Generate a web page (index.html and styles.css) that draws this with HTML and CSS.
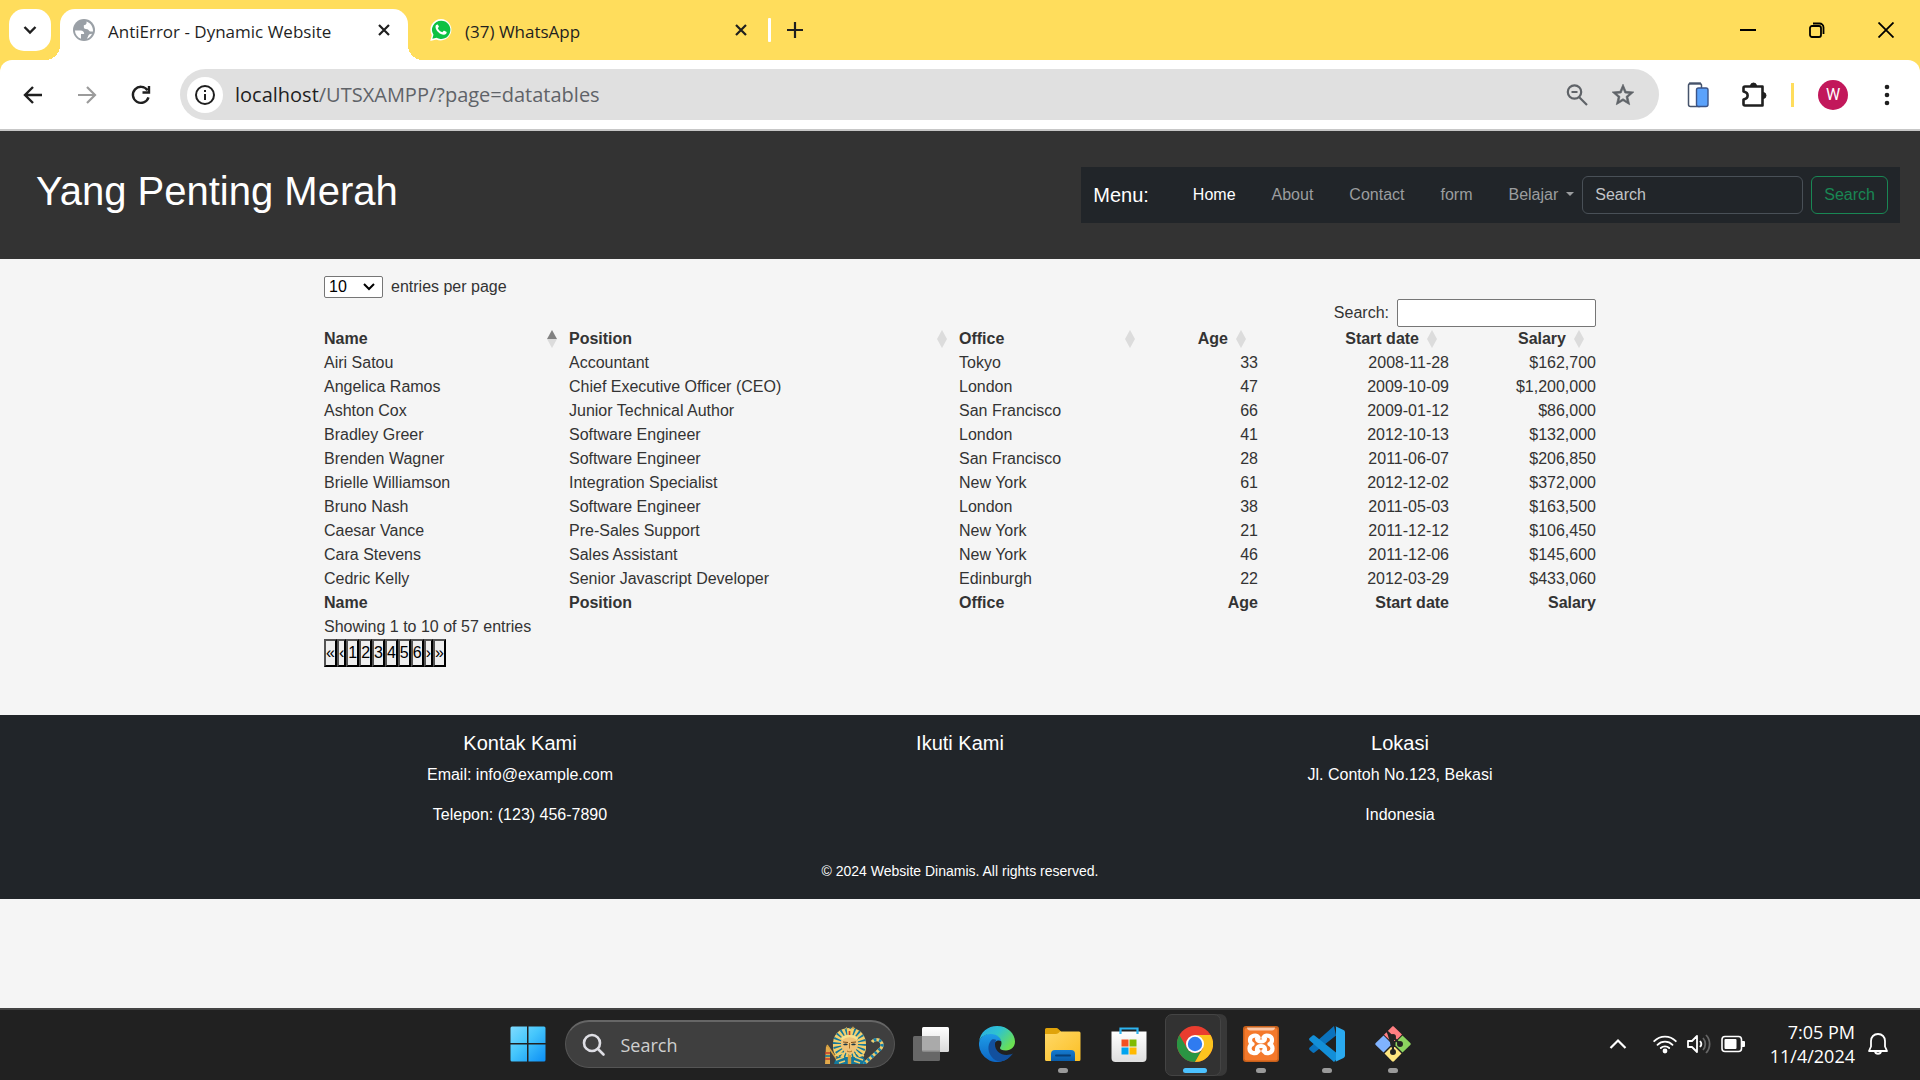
FILE: index.html
```html
<!DOCTYPE html>
<html lang="id">
<head>
<meta charset="utf-8">
<title>AntiError - Dynamic Website</title>
<link rel="stylesheet" href="styles.css">
</head>
<body>
<div class="desktop">
  <div class="browser">
    <div class="tabstrip">
      <button class="tab-search" aria-label="Search tabs"><svg width="16" height="16" viewBox="0 0 16 16" fill="none" stroke="#1f1f1f" stroke-width="2.4"><path d="M2.500 5l5.500 5.500L13.500 5"/></svg></button>
      <div class="tab tab-active">
        <svg width="22" height="22" viewBox="0 0 24 24"><circle cx="12" cy="12" r="12" fill="#9aa0a6"/><path fill="#fff" d="M2.100 12.500h6.400c2.200 0 3.700 1.600 3.700 3.800h-3.500v5.200C4.800 20 2.300 16.700 2.100 12.500zM14.800 2.500v1.700c0 1.800-1.200 2.600-3 2.700v1.800c0 1.300.8 2 2.300 2.200l1.600.2c1.500.2 1.800 2.300 3.600 2.500h2.500c.4-5.100-2.700-9.400-7-10.900zM20.800 16c-1 2.400-3 4.500-5.700 5.500l1.200-2.200c.7-1.400.6-2.300 2-2.700z"/></svg>
        <span class="tab-title">AntiError - Dynamic Website</span>
        <button class="icon-button" aria-label="Close tab"><svg width="14" height="14" viewBox="0 0 14 14" fill="none" stroke="#1f1f1f" stroke-width="2.200"><path d="M2 2l10 10M12 2L2 12"/></svg></button>
      </div>
      <div class="tab">
        <svg width="22" height="22" viewBox="0 0 24 24"><path fill="#fff" d="M12.200 0A11.700 11.700 0 0 0 2 17.500L.3 24l6.600-1.600A11.700 11.700 0 1 0 12.200 0z"/><path fill="#0dc143" d="M12.200 1.800a10 10 0 0 0-8.400 15.400l-1.200 4.300 4.500-1.100A10 10 0 1 0 12.200 1.800z"/><path fill="#fff" d="M8.800 6.500c-.3-.5-.5-.5-.9-.5-.6 0-1.900.8-1.900 2.700 0 3.500 4.900 8.500 9.200 8.500 1.700 0 3-1.200 3-2.500 0-.5-.1-.6-.4-.8l-2.200-1.100c-.4-.2-.7-.1-.9.2l-1 1.200c-.2.300-.5.300-.8.100-1.900-.8-3.200-2.100-4.200-3.900-.2-.3-.1-.5.100-.8l.8-1c.2-.3.100-.5 0-.7z"/></svg>
        <span class="tab-title">(37) WhatsApp</span>
        <button class="icon-button" aria-label="Close tab"><svg width="14" height="14" viewBox="0 0 14 14" fill="none" stroke="#1f1f1f" stroke-width="2.200"><path d="M2 2l10 10M12 2L2 12"/></svg></button>
      </div>
      <span class="tab-divider"></span>
      <button class="icon-button" aria-label="New tab"><svg width="16" height="16" viewBox="0 0 16 16" stroke="#1f1f1f" stroke-width="2.200"><path d="M8 0v16M0 8h16"/></svg></button>
      <div class="window-controls">
        <button class="icon-button" aria-label="Minimize"><svg width="16" height="16" viewBox="0 0 16 16"><path d="M0 7h16v2H0z"/></svg></button>
        <button class="icon-button" aria-label="Restore"><svg width="16" height="16" viewBox="0 0 16 16" fill="none" stroke="#000" stroke-width="1.800"><rect x="1" y="4" width="11" height="11" rx="2"/><path d="M4 1.500h6.500a4 4 0 0 1 4 4V12"/></svg></button>
        <button class="icon-button" aria-label="Close"><svg width="16" height="16" viewBox="0 0 16 16" stroke="#000" stroke-width="1.800"><path d="M.5.5l15 15M15.500.5l-15 15"/></svg></button>
      </div>
    </div>
    <div class="toolbar">
      <div class="nav-buttons">
        <button class="icon-button" aria-label="Back"><svg width="20" height="20" viewBox="0 0 20 20" fill="none" stroke="#1f1f1f" stroke-width="2.400"><path d="M19 10H2.500M10 2L2 10l8 8"/></svg></button>
        <button class="icon-button" aria-label="Forward"><svg width="20" height="20" viewBox="0 0 20 20" fill="none" stroke="#9b9b9b" stroke-width="2.200"><path d="M1 10h16.500M10 2l8 8-8 8"/></svg></button>
        <button class="icon-button" aria-label="Reload"><svg width="20" height="20" viewBox="0 0 20 20" fill="none" stroke="#1f1f1f" stroke-width="2.400"><path d="M17.500 12.300A8 8 0 1 1 16.500 5.300M18 1v6.500h-6.500"/></svg></button>
      </div>
      <div class="omnibox">
        <button class="site-info" aria-label="Site information"><svg width="22" height="22" viewBox="0 0 22 22" fill="none" stroke="#1f1f1f" stroke-width="2"><circle cx="11" cy="11" r="9"/><path d="M11 10v6M11 6v2"/></svg></button>
        <div class="url">localhost<span class="url-path">/UTSXAMPP/?page=datatables</span></div>
        <button class="icon-button" aria-label="Zoom"><svg width="22" height="22" viewBox="0 0 22 22" fill="none" stroke="#5f6368" stroke-width="2.200"><circle cx="8.500" cy="8" r="6.700"/><path d="M13 13l8 8M5.500 8h6"/></svg></button>
        <button class="icon-button" aria-label="Bookmark"><svg width="26" height="26" viewBox="0 0 24 24" fill="#5f6368"><path stroke="#5f6368" stroke-width=".6" d="M22 9.240l-7.190-.62L12 2 9.190 8.630 2 9.240l5.460 4.730L5.820 21 12 17.270 18.180 21l-1.630-7.030L22 9.240zM12 15.400l-3.760 2.270 1-4.280-3.320-2.880 4.380-.38L12 6.100l1.710 4.040 4.380.38-3.320 2.880 1 4.280L12 15.400z"/></svg></button>
      </div>
      <button class="icon-button phone" aria-label="Devices"><svg width="22" height="26" viewBox="0 0 22 26"><rect x="1.500" y="1.500" width="13" height="23" rx="2" fill="#fff" stroke="#46536b" stroke-width="1.500"/><path d="M2 1.500h12" stroke="#46536b" stroke-width="2.200"/><rect x="9.500" y="6" width="11.500" height="18.500" rx="2" fill="#5ba2fb" stroke="#3b5488" stroke-width="1.400"/></svg></button>
      <button class="icon-button puzzle" aria-label="Extensions"><svg width="26" height="26" viewBox="0 0 26 26"><path d="M4 4.500h17.500V23.500H4a1.500 1.500 0 0 1-1.500-1.500v-4.500c5.500-1 5.500-7 0-8V6A1.500 1.500 0 0 1 4 4.500z" fill="none" stroke="#1f1f1f" stroke-width="2.600" stroke-linejoin="round"/><path d="M9.500 4a3 3 0 0 1 6 0zM22 10.500a3 3 0 0 1 0 6z" fill="#1f1f1f" stroke="#1f1f1f"/></svg></button>
      <span class="toolbar-divider"></span>
      <button class="avatar" aria-label="Profile">W</button>
      <button class="icon-button" aria-label="More"><svg width="22" height="22" viewBox="0 0 22 22" fill="#1f1f1f"><circle cx="11" cy="3" r="2.300"/><circle cx="11" cy="11" r="2.300"/><circle cx="11" cy="19" r="2.300"/></svg></button>
    </div>
  </div>

  <div class="page">
    <header class="site-header">
      <h1>Yang Penting Merah</h1>
      <nav class="navbar">
        <a class="brand" href="#">Menu:</a>
        <ul class="nav-links">
          <li><a class="active" href="#">Home</a></li>
          <li><a href="#">About</a></li>
          <li><a href="#">Contact</a></li>
          <li><a href="#">form</a></li>
          <li><a class="dropdown" href="#">Belajar</a></li>
        </ul>
        <form class="nav-search">
          <input type="search" placeholder="Search" aria-label="Search">
          <button type="button">Search</button>
        </form>
      </nav>
    </header>

    <main class="container">
      <div class="length-row">
        <div class="select-box">
          <select id="length"><option>10</option><option>25</option><option>50</option></select>
          <svg width="12" height="8" viewBox="0 0 12 8" fill="none" stroke="#000" stroke-width="2"><path d="M1 1l5 5 5-5"/></svg>
        </div>
        <label for="length">entries per page</label>
      </div>
      <div class="filter-row">
        <label for="filter">Search:</label>
        <input id="filter" type="search">
      </div>
      <table class="data">
        <colgroup><col class="c-name"><col class="c-position"><col class="c-office"><col class="c-age"><col class="c-date"><col class="c-salary"></colgroup>
        <thead>
          <tr>
            <th class="sorted">Name</th><th>Position</th><th>Office</th><th class="num">Age</th><th class="num">Start date</th><th class="num">Salary</th>
          </tr>
        </thead>
        <tbody>
          <tr><td>Airi Satou</td><td>Accountant</td><td>Tokyo</td><td class="num">33</td><td class="num">2008-11-28</td><td class="num">$162,700</td></tr>
          <tr><td>Angelica Ramos</td><td>Chief Executive Officer (CEO)</td><td>London</td><td class="num">47</td><td class="num">2009-10-09</td><td class="num">$1,200,000</td></tr>
          <tr><td>Ashton Cox</td><td>Junior Technical Author</td><td>San Francisco</td><td class="num">66</td><td class="num">2009-01-12</td><td class="num">$86,000</td></tr>
          <tr><td>Bradley Greer</td><td>Software Engineer</td><td>London</td><td class="num">41</td><td class="num">2012-10-13</td><td class="num">$132,000</td></tr>
          <tr><td>Brenden Wagner</td><td>Software Engineer</td><td>San Francisco</td><td class="num">28</td><td class="num">2011-06-07</td><td class="num">$206,850</td></tr>
          <tr><td>Brielle Williamson</td><td>Integration Specialist</td><td>New York</td><td class="num">61</td><td class="num">2012-12-02</td><td class="num">$372,000</td></tr>
          <tr><td>Bruno Nash</td><td>Software Engineer</td><td>London</td><td class="num">38</td><td class="num">2011-05-03</td><td class="num">$163,500</td></tr>
          <tr><td>Caesar Vance</td><td>Pre-Sales Support</td><td>New York</td><td class="num">21</td><td class="num">2011-12-12</td><td class="num">$106,450</td></tr>
          <tr><td>Cara Stevens</td><td>Sales Assistant</td><td>New York</td><td class="num">46</td><td class="num">2011-12-06</td><td class="num">$145,600</td></tr>
          <tr><td>Cedric Kelly</td><td>Senior Javascript Developer</td><td>Edinburgh</td><td class="num">22</td><td class="num">2012-03-29</td><td class="num">$433,060</td></tr>
        </tbody>
        <tfoot>
          <tr><th>Name</th><th>Position</th><th>Office</th><th class="num">Age</th><th class="num">Start date</th><th class="num">Salary</th></tr>
        </tfoot>
      </table>
      <div class="info">Showing 1 to 10 of 57 entries</div>
      <nav class="paging" aria-label="Pages">
        <button>«</button><button>‹</button><button>1</button><button>2</button><button>3</button><button>4</button><button>5</button><button>6</button><button>›</button><button>»</button>
      </nav>
    </main>

    <footer class="site-footer">
      <div class="footer-columns">
        <div><h5>Kontak Kami</h5><p>Email: info@example.com</p><p>Telepon: (123) 456-7890</p></div>
        <div><h5>Ikuti Kami</h5></div>
        <div><h5>Lokasi</h5><p>Jl. Contoh No.123, Bekasi</p><p>Indonesia</p></div>
      </div>
      <p class="copyright">© 2024 Website Dinamis. All rights reserved.</p>
    </footer>
  </div>

  <div class="taskbar">
    <div class="apps">
      <button class="app" aria-label="Start"><svg width="36" height="36" viewBox="0 0 36 36"><defs><linearGradient id="win" x1="0" y1="0" x2="36" y2="36" gradientUnits="userSpaceOnUse"><stop offset="0" stop-color="#81dcff"/><stop offset=".45" stop-color="#45c6fc"/><stop offset="1" stop-color="#0a8df5"/></linearGradient></defs><path fill="url(#win)" d="M2 .5h15v16.500H.5V2A1.500 1.500 0 0 1 2 .5zM18.500.5H34A1.500 1.500 0 0 1 35.500 2v15h-17zM.5 18.500H17v17H2A1.500 1.500 0 0 1 .5 34zM18.500 18.500h17V34a1.500 1.500 0 0 1-1.500 1.500H18.500z"/></svg></button>
      <label class="task-search">
        <svg width="24" height="24" viewBox="0 0 24 24" fill="none" stroke="#dedee4" stroke-width="2.600" stroke-linecap="round"><circle cx="10" cy="10" r="8"/><path d="M16 16l5.500 5.500"/></svg>
        <input type="text" placeholder="Search" aria-label="Search">
        <svg width="60" height="38" viewBox="0 0 60 38">
          <path d="M1 20l4 2v16H0z" fill="#e3a94a"/><path d="M0 27h5M0 33h5" stroke="#c33b2b" stroke-width="1.600"/><path d="M0 30h5" stroke="#177a9e" stroke-width="1.600"/><path d="M2 19l13 19" stroke="#d9a441" stroke-width="1.600"/>
          <path d="M9 38c1-5 4-9 7-11h18c3 2 6 6 8 11z" fill="#14789c"/>
          <path d="M14 31c-4-1-6-5-6-10C7 9 14 2 24.500 2S42 9 41 21c0 5-2 9-6 10z" fill="#f3cf6d"/>
          <circle cx="24.500" cy="18" r="12.500" fill="none" stroke="#14789c" stroke-width="8" stroke-dasharray="1.500 2.400"/>
          <path d="M10 30l8-3M11 34l8-3M14 37l6-2M39 30l-8-3M38 34l-8-3M35 37l-6-2" stroke="#f3cf6d" stroke-width="1.600"/>
          <path d="M39 38L54 24a5.500 5.500 0 1 0-7-8" fill="none" stroke="#f0cd6b" stroke-width="3.200"/><path d="M39 38L54 24a5.500 5.500 0 1 0-7-8" fill="none" stroke="#147fae" stroke-width="3.200" stroke-dasharray="2.500 2.500"/>
          <path d="M16 16c0-4 4-6 8.500-6s8.500 2 8.500 6c0 6-3 11-8.500 13C19 27 16 22 16 16z" fill="#efc277"/>
          <path d="M16.500 13c4-4 12-4 16 0" stroke="#f8df8c" stroke-width="2.600" fill="none"/>
          <path d="M18 16l5 .5M26 16.500l5-.5" stroke="#7a4d1c"/>
          <path d="M18 18.500c2-1.500 4-1 5 0-2 1.300-4 1-5 0zM26 18.500c2-1.500 4-1 5 0-2 1.300-4 1-5 0z" fill="#1b3a4a"/><path d="M24.500 17v5.500M22 25c2 1 3 1 5 0" stroke="#a46e25" fill="none"/>
          <path d="M22.800 29h3.400v9h-3.400z" fill="#dba03d"/>
          <path d="M22.500 3h4v6h-4z" fill="#f3cf6d"/><path d="M24.500 5v4" stroke="#c33b2b" stroke-width="1.600"/><path d="M20 3.500c1-2.500 2-2.500 3 0M26 3.500c1-3 3-3 3.500-.5" stroke="#e8b850" fill="none"/>
        </svg>
      </label>
      <button class="app" aria-label="Task view"><svg width="36" height="36" viewBox="0 0 36 36"><defs><linearGradient id="tv" x1="0" y1="0" x2="0" y2="1"><stop offset="0" stop-color="#fff"/><stop offset="1" stop-color="#d9d9d9"/></linearGradient></defs><rect x="9" y="1" width="27" height="25" rx="1.500" fill="url(#tv)"/><rect x="0" y="10" width="27" height="25" rx="1.500" fill="#767676" opacity=".82"/><path d="M9 10h18v14.500H9z" fill="#aaa"/></svg></button>
      <button class="app" aria-label="Edge"><svg width="36" height="36" viewBox="0 0 36 36"><defs><linearGradient id="e1" x1="0" y1="0" x2="1" y2=".6"><stop offset="0" stop-color="#29a9e8"/><stop offset=".5" stop-color="#2fc3cf"/><stop offset="1" stop-color="#6be052"/></linearGradient><linearGradient id="e2" x1="0" y1="0" x2="0" y2="1"><stop offset="0" stop-color="#1e9de8"/><stop offset="1" stop-color="#0d66c4"/></linearGradient></defs><path fill="url(#e2)" d="M0 17C1 10 7 7.500 12 7.500c6 0 10 3.500 10.500 8-3-2.500-8-.5-8 5.500 0 8 8 14 16 10A18 18 0 0 1 0 17z"/><path fill="url(#e1)" d="M0 16C1 6 9 0 18 0c11 0 18 8 18 15.500 0 5.500-4 9-9 9-4 0-6-1-6-2.500 0-1 1.500-2 1.500-5C22.500 12 18 8 12 8 6 8 1 11 0 16z"/><path fill="#12509e" d="M13 13.500C9 17 8 24 12 30c3 4 7 6 10 5.500 5-1 9-4 12-8-9 4-18-1-18-9 0-2 .6-3.500 1.500-4.500-1.500-.8-3-.9-4.500-.5z"/></svg></button>
      <button class="app running" aria-label="File Explorer"><svg width="36" height="36" viewBox="0 0 36 36"><defs><linearGradient id="fx" x1="0" y1="0" x2="1" y2="1"><stop offset="0" stop-color="#ffd867"/><stop offset="1" stop-color="#fbbf24"/></linearGradient><linearGradient id="fb" x1="0" y1="0" x2="0" y2="1"><stop offset="0" stop-color="#157bd0"/><stop offset="1" stop-color="#0a5ca8"/></linearGradient></defs><path fill="#e0a30a" d="M0 3.500A1.500 1.500 0 0 1 1.500 2H11c1 0 2 .5 2.700 1.200L16 5.500V12H0z"/><path fill="url(#fx)" d="M0 8h10c1.500 0 2.500-.3 3.500-1L15 5.500h19A1.500 1.500 0 0 1 35.500 7v26.500A1.500 1.500 0 0 1 34 35H1.500A1.500 1.500 0 0 1 0 33.500z"/><path fill="url(#fb)" d="M6 35v-7a4 4 0 0 1 4-4h16a4 4 0 0 1 4 4v7z"/><path d="M11 29.500h14" stroke="#073f77" stroke-width="2" stroke-linecap="round"/></svg></button>
      <button class="app" aria-label="Store"><svg width="36" height="36" viewBox="0 0 36 36"><defs><linearGradient id="ms" x1="0" y1="0" x2="0" y2="1"><stop offset="0" stop-color="#fff"/><stop offset="1" stop-color="#dedede"/></linearGradient></defs><path d="M.5 5.500h35V32a4 4 0 0 1-4 4h-27a4 4 0 0 1-4-4z" fill="url(#ms)"/><path d="M9.500 8V2.500h17V8" fill="none" stroke="#2db4f0" stroke-width="2.200"/><path fill="#f25022" d="M10.500 13.500h7v7h-7z"/><path fill="#7fba00" d="M18.500 13.500h7v7h-7z"/><path fill="#00a4ef" d="M10.500 21.500h7v7h-7z"/><path fill="#ffb900" d="M18.500 21.500h7v7h-7z"/></svg></button>
      <button class="app running focused" aria-label="Chrome"><svg width="36" height="36" viewBox="0 0 36 36"><circle cx="18" cy="18" r="18" fill="#ea3d2f"/><path fill="#2a9543" d="M2.400 9L10.200 22.500A9 9 0 0 0 25.800 22.500L18 36A18 18 0 0 1 2.400 9z"/><path fill="#fcc31e" d="M18 9h15.600A18 18 0 0 1 18 36l7.800-13.500z"/><circle cx="18" cy="18" r="9" fill="#fff"/><circle cx="18" cy="18" r="7.200" fill="#2f7bf0"/></svg></button>
      <button class="app running" aria-label="XAMPP"><svg width="36" height="36" viewBox="0 0 36 36"><rect width="36" height="36" rx="3" fill="#c8601b"/><rect x="1.500" y="2" width="33" height="32.500" rx="2" fill="#f4792b"/><path d="M4 1.500h28c0 2-1.500 3-3 3H7c-1.500 0-3-1-3-3z" fill="#fff" opacity=".6"/><path d="M15.500 11.500c-2-3.500-8.500-2-8.500 2.500 0 2 1 3.500 2.500 4-2 .8-3 2.500-3 4.500 0 5 6.500 6 9 2.500M20.500 11.500c2-3.500 8.500-2 8.500 2.500 0 2-1 3.500-2.500 4 2 .8 3 2.500 3 4.500 0 5-6.500 6-9 2.500M14 12.500c0 4 8 4 8 0M14 25v-2c0-4 8-4 8 0v2" fill="none" stroke="#fff" stroke-width="4.200" stroke-linecap="round" stroke-linejoin="round"/></svg></button>
      <button class="app running" aria-label="VS Code"><svg width="36" height="36" viewBox="0 0 36 36"><path fill="#0a72bd" d="M27 9.500L5.500 26.500c-.6.500-1.300.5-1.900 0L.7 24c-.8-.7-.8-1.800 0-2.500L25 0z"/><path fill="#138fd8" d="M27 26.500L5.500 9.500c-.6-.5-1.300-.5-1.900 0L.7 12c-.8.700-.8 1.800 0 2.500L25 36l2-2z"/><path fill="#2aaaf0" d="M26 0l8.500 4a2.500 2.500 0 0 1 1.500 2.200v23.600a2.500 2.500 0 0 1-1.500 2.200L26 36c-.8.200-1.200 0-1.500-.3 1.200 1 2.500.2 2.500-1.200v-33C27 .1 25.700-.7 24.500.3 24.900 0 25.400-.2 26 0z"/></svg></button>
      <button class="app running" aria-label="Git"><svg width="36" height="36" viewBox="0 0 36 36"><path fill="#ff7f82" d="M17 .7c.6-.6 1.400-.6 2 0l8 7.800-6.500 6.500h-5L9 8.700z"/><path fill="#80b3ff" d="M8.500 9.500l7 7v3l-7 7L.7 19c-.6-.6-.6-1.400 0-2z"/><path fill="#8cd35f" d="M27.500 9.500l7.800 7.500c.6.600.6 1.400 0 2l-7.800 7.500-7-7v-3z"/><path fill="#ffe680" d="M9.500 27.500L16 21h4l6.500 6.500-7.500 7.800c-.6.600-1.400.6-2 0z"/><g stroke="#242424" stroke-width="2" fill="#242424"><path d="M11.500 5L18 11v15M18 11l7 7"/><circle cx="18" cy="11" r="2"/><circle cx="18" cy="26" r="2"/><circle cx="25" cy="18" r="2"/></g></svg></button>
    </div>
    <div class="tray">
      <svg width="18" height="12" viewBox="0 0 18 12" fill="none" stroke="#fff" stroke-width="2.200"><path d="M1.500 10L9 2.500l7.500 7.500"/></svg>
      <svg class="wifi" width="24" height="20" viewBox="0 0 24 20" fill="none" stroke="#fff" stroke-width="1.800" stroke-linecap="round"><path d="M1.200 7.200a15 15 0 0 1 21.600 0M4.500 10.800a10.500 10.500 0 0 1 15 0M7.800 14a6 6 0 0 1 8.400 0"/><circle cx="12" cy="17" r="1.500" fill="#fff"/></svg>
      <svg width="26" height="22" viewBox="0 0 26 22" fill="none" stroke="#fff" stroke-width="1.800" stroke-linejoin="round"><path d="M2 8h4l5-5v16l-5-5H2z"/><path d="M14 8a4.500 4.500 0 0 1 0 6"/><path d="M17 5a9 9 0 0 1 0 12M20 2a13 13 0 0 1 0 18" stroke="#666"/></svg>
      <svg width="24" height="18" viewBox="0 0 24 18"><rect x="1" y="1.500" width="19.500" height="15" rx="3" fill="none" stroke="#fff" stroke-width="1.600"/><rect x="3.500" y="4" width="12" height="10" rx="1" fill="#fff"/><path d="M21 6h2a1 1 0 0 1 1 1v4a1 1 0 0 1-1 1h-2z" fill="#fff"/></svg>
      <div class="clock"><span>7:05 PM</span><span>11/4/2024</span></div>
      <svg width="20" height="24" viewBox="0 0 20 24" fill="none" stroke="#fff" stroke-width="1.800" stroke-linejoin="round"><path d="M10 2c-4.200 0-7 3-7 7v5.500L1 19h18l-2-4.500V9c0-4-2.800-7-7-7zM7 19.500c.5 3 5.500 3 6 0"/></svg>
    </div>
  </div>
</div>
</body>
</html>
```
FILE: styles.css
```css
* { box-sizing: border-box; }
body { margin: 0; font-family: "Liberation Sans", Arial, sans-serif; font-size: 16px; line-height: 24px; color: #333; background: #f5f5f5; }
button, input, select { font: inherit; margin: 0; }
h1, h5, p, ul { margin: 0; padding: 0; font-weight: 400; }
a { color: inherit; text-decoration: none; }
svg { display: block; flex: none; }
.desktop { min-height: 100vh; display: flex; flex-direction: column; }
.icon-button { padding: 0; border: 0; background: none; flex: none; }

/* Browser frame */
.browser { background: #ffdd5c; font-family: "Open Sans", "Noto Sans", sans-serif; color: #1f1f1f; border-bottom: 2px solid #c7c7c7; }
.tabstrip { height: 60px; display: flex; align-items: center; padding-left: 9px; }
.tab-search { width: 42px; height: 42px; border: 0; border-radius: 15px; background: #fff; padding: 0; display: grid; place-items: center; margin-right: 9px; }
.tab { display: flex; align-items: center; gap: 13px; width: 357px; padding: 0 17px 0 22px; }
.tab-title { flex: 1; font-size: 17px; padding-top: 3px; white-space: nowrap; }
.tab-active { position: relative; align-self: flex-end; width: 348px; height: 51px; padding: 0 17px 9px 13px; background: #fff; border-radius: 15px 15px 0 0; }
.tab-active::before, .tab-active::after { content: ""; position: absolute; bottom: 0; width: 15px; height: 15px; }
.tab-active::before { right: 100%; background: radial-gradient(circle at 0 0, transparent 15px, #fff 15px); }
.tab-active::after { left: 100%; background: radial-gradient(circle at 100% 0, transparent 15px, #fff 15px); }
.tab-divider { width: 3px; height: 24px; border-radius: 1px; background: #fff; margin: 0 16px 0 3px; }
.window-controls { margin-left: auto; display: flex; gap: 53px; padding-right: 26px; }
.toolbar { height: 69px; display: flex; align-items: center; background: #fff; border-radius: 12px 12px 0 0; padding: 0 22px 0 23px; }
.nav-buttons { display: flex; gap: 34px; width: 157px; }
.omnibox { flex: 1; height: 51px; display: flex; align-items: center; gap: 22px; background: #e0e0e0; border-radius: 26px; padding: 0 23px 0 7px; }
.site-info { width: 36px; height: 36px; border: 0; border-radius: 50%; background: #fff; padding: 0; display: grid; place-items: center; }
.url { flex: 1; font-size: 20px; margin-left: -10px; }
.url-path { color: #5f6368; }
.phone { margin: 0 32px 0 28px; }
.puzzle { margin-right: 24px; }
.toolbar-divider { width: 3px; height: 24px; background: #ffdd5c; margin-right: 24px; }
.avatar { width: 30px; height: 30px; border: 0; border-radius: 50%; background: #c2185b; color: #fff; padding: 0; font-family: Roboto, sans-serif; font-size: 16px; margin-right: 28px; }

/* Site */
.page { flex: 1; }
.site-header { min-height: 128px; display: flex; align-items: center; justify-content: space-between; padding: 0 20px 0 36px; background: #333; color: #fff; }
.site-header h1 { font-size: 40px; line-height: 48px; margin-bottom: 8px; }
.navbar { display: flex; align-items: center; background: #212529; padding: 9px 12px; }
.brand { font-size: 20px; margin-right: 44px; }
.nav-links { display: flex; gap: 36px; list-style: none; color: #9b9d9f; margin-right: 8px; }
.nav-links .active { color: #fff; }
.dropdown::after { content: ""; display: inline-block; margin-left: 8px; vertical-align: 4px; border: 4px solid transparent; border-top-color: currentColor; border-bottom: 0; }
.nav-search { display: flex; gap: 8px; }
.nav-search input { width: 221px; height: 38px; padding: 6px 12px; color: #dee2e6; background: #212529; border: 1px solid #495057; border-radius: 6px; appearance: none; }
.nav-search input::placeholder { color: #c1c4c8; }
.nav-search button { height: 38px; padding: 0 12px; color: #198754; background: none; border: 1px solid #198754; border-radius: 6px; }
.container { width: 100%; max-width: 1320px; margin: 0 auto; padding: 16px 24px 48px; }
.length-row { display: flex; align-items: center; gap: 8px; height: 24px; }
.select-box { display: grid; align-items: center; }
.select-box > * { grid-area: 1 / 1; }
.select-box svg { justify-self: end; margin-right: 8px; pointer-events: none; }
.select-box select { width: 59px; height: 22px; line-height: 20px; padding: 0 4px; appearance: none; color: #000; background-color: #fff; border: 1px solid #767676; border-radius: 2px; }
.filter-row { display: flex; align-items: center; justify-content: flex-end; gap: 8px; }
.filter-row input { width: 199px; height: 28px; border: 1px solid #767676; border-radius: 2px; background: #fff; }
.data { width: 100%; table-layout: fixed; border-collapse: collapse; }
.c-name { width: 245px; }
.c-position { width: 390px; }
.c-office { width: 188px; }
.c-age { width: 111px; }
.c-date { width: 191px; }
.c-salary { width: 147px; }
.data th, .data td { padding: 0; text-align: left; }
.data .num { text-align: right; }
.data thead th { position: relative; padding-right: 30px; }
.data thead th::before, .data thead th::after { content: ""; position: absolute; right: 12px; border: 5px solid transparent; opacity: .13; }
.data thead th::before { top: 3px; border-top: 0; border-bottom: 9px solid #333; }
.data thead th::after { top: 12px; border-bottom: 0; border-top: 9px solid #333; }
.data thead .sorted::before { opacity: .6; }
.paging { display: flex; }
.paging button { height: 28px; padding: 0; color: #000; background: #efefef; border: 2px outset #000; }
.site-footer { background: #212529; color: #fff; text-align: center; padding: 16px 0; }
.footer-columns { display: grid; grid-template-columns: repeat(3, 1fr); max-width: 1320px; margin: 0 auto; }
.site-footer h5 { font-size: 20px; margin-bottom: 8px; }
.site-footer p { margin-bottom: 16px; }
.site-footer .copyright { font-size: 14px; margin: 16px 0 0; }

/* Taskbar */
.taskbar { height: 72px; display: grid; grid-template-columns: 1fr auto 1fr; align-items: center; padding-bottom: 2px; background: #212121; border-top: 2px solid #434343; font-family: "Open Sans", "Noto Sans", sans-serif; color: #fff; }
.apps { grid-column: 2; display: flex; align-items: center; }
.app { position: relative; width: 66px; height: 60px; padding: 0; border: 0; background: none; display: grid; place-items: center; }
.running::after { content: ""; position: absolute; left: 28px; bottom: 1px; width: 10px; height: 5px; border-radius: 3px; background: #9a9a9a; }
.focused::before { content: ""; position: absolute; z-index: 0; left: 3px; top: 0; width: 54px; height: 60px; border-radius: 7px; background: #323232; border: 1px solid #444; box-shadow: 6px 0 0 #383838; }
.focused svg { position: relative; }
.focused::after { left: 21px; width: 24px; background: #4cc2ff; }
.task-search { width: 330px; height: 48px; margin: 0 3px 0 4px; padding: 0 9px 0 16px; display: flex; align-items: center; gap: 15px; background: #3f3f3f; border: 1px solid #555; border-top: 2px solid #666; border-radius: 24px; }
.task-search input { flex: 1; min-width: 0; border: 0; padding: 0; background: none; color: #fff; font-size: 18px; }
.task-search input::placeholder { color: #cfcfcf; }
.tray { display: flex; align-items: center; justify-content: flex-end; padding-right: 32px; gap: 9px; }
.wifi { margin-left: 17px; }
.clock { display: flex; flex-direction: column; text-align: right; font-size: 18px; margin: 0 4px 0 16px; }
```
